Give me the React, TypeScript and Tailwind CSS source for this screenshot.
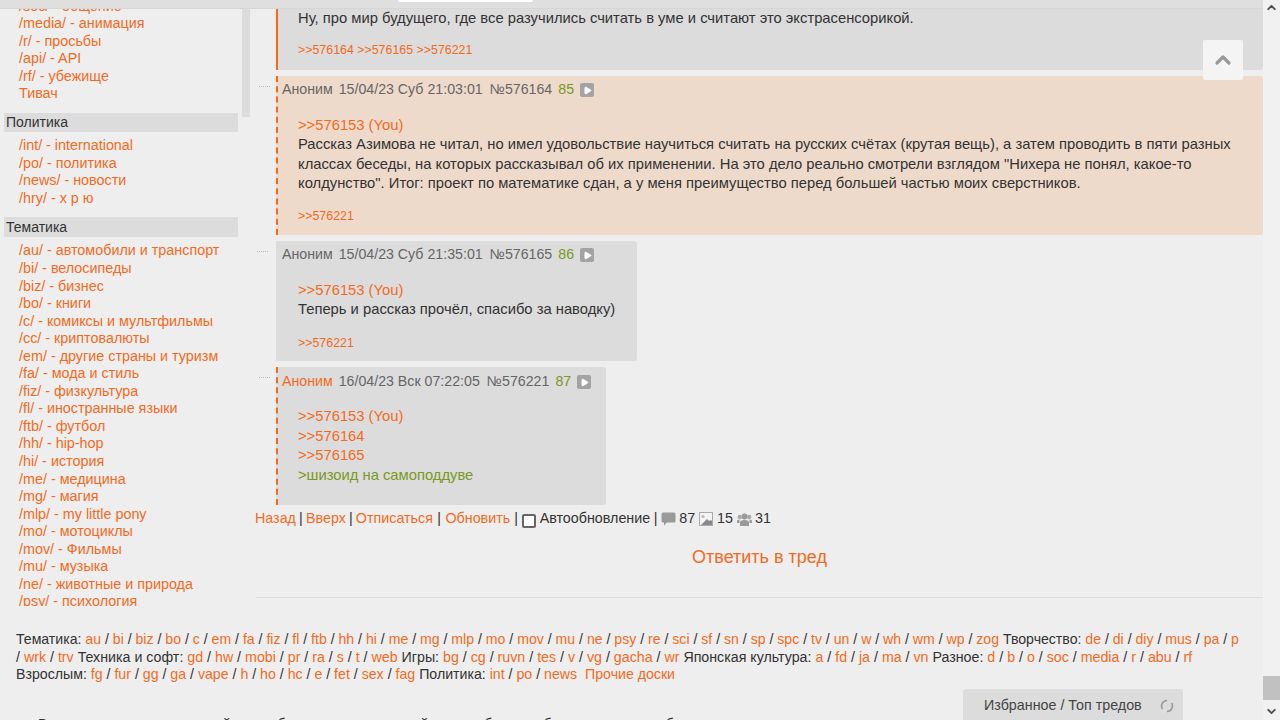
import { Fragment } from "react";
import { ChevronUp, ChevronDown, Play } from "lucide-react";

const ORANGE = "text-[#f26b1d]";

const politics = ["/int/ - international", "/po/ - политика", "/news/ - новости", "/hry/ - х р ю"];
const misc = ["/media/ - анимация", "/r/ - просьбы", "/api/ - API", "/rf/ - убежище", "Тивач"];
const topics = [
  "/au/ - автомобили и транспорт",
  "/bi/ - велосипеды",
  "/biz/ - бизнес",
  "/bo/ - книги",
  "/c/ - комиксы и мультфильмы",
  "/cc/ - криптовалюты",
  "/em/ - другие страны и туризм",
  "/fa/ - мода и стиль",
  "/fiz/ - физкультура",
  "/fl/ - иностранные языки",
  "/ftb/ - футбол",
  "/hh/ - hip-hop",
  "/hi/ - история",
  "/me/ - медицина",
  "/mg/ - магия",
  "/mlp/ - my little pony",
  "/mo/ - мотоциклы",
  "/mov/ - Фильмы",
  "/mu/ - музыка",
  "/ne/ - животные и природа",
  "/psy/ - психология",
];

function BoardList({ items }: { items: string[] }) {
  return (
    <ul className={`pl-[19px] text-[14.35px] ${ORANGE}`}>
      {items.map((b) => (
        <li key={b} className="h-[17.55px] leading-[17.55px] whitespace-nowrap">
          {b}
        </li>
      ))}
    </ul>
  );
}

function Sidebar() {
  return (
    <aside className="relative h-[606px] w-[251px] shrink-0 overflow-hidden">
      <div className="absolute top-0 right-[1px] h-[117px] w-[8px] bg-[#dcdcdc]" />
      <div className={`h-[15px] overflow-hidden pl-[19px] text-[14.35px] leading-[12px] ${ORANGE}`}>/soc/ - общение</div>
      <BoardList items={misc} />
      <h4 className="mt-[10px] ml-1 flex h-[19px] w-[234px] items-center bg-[#dcdcdc] pl-[2px] text-[#333]">Политика</h4>
      <div className="mt-[5.5px]">
        <BoardList items={politics} />
      </div>
      <h4 className="mt-[10px] ml-1 flex h-[20px] w-[234px] items-center bg-[#dcdcdc] pt-px pl-[2px] text-[#333]">Тематика</h4>
      <div className="mt-[5px]">
        <BoardList items={topics} />
      </div>
    </aside>
  );
}

function PostHead({ name, date, num, idx, self }: { name: string; date: string; num: string; idx: number; self?: boolean }) {
  return (
    <div className="flex h-[20px] items-center text-[14.2px] whitespace-nowrap text-[#666]">
      <span className={self ? ORANGE : ""}>{name}</span>
      <span className="ml-[6px]">{date}</span>
      <span className="ml-[7px]">№{num}</span>
      <span className="ml-[6px] text-[#789922]">{idx}</span>
      <span className="ml-[6px] flex h-[14px] w-[14px] items-center justify-center rounded-[2px] bg-[#a3a3a3]">
        <Play size={9} className="fill-white text-white" />
      </span>
    </div>
  );
}

function Dots() {
  return <div className="absolute top-[10px] left-[-19px] h-px w-[11px] border-t border-dotted border-[#bbb]" />;
}

function Sep({ w }: { w: string }) {
  return <span className={`${w} text-center text-[#333]`}>|</span>;
}

function Links({ items }: { items: string[] }) {
  return (
    <>
      {items.map((l, i) => (
        <Fragment key={l}>
          <span className={ORANGE}>{l}</span>
          {i < items.length - 1 ? " / " : " "}
        </Fragment>
      ))}
    </>
  );
}

function Footer() {
  return (
    <div className="mt-[25px] pl-4 leading-[17.6px] whitespace-nowrap text-[#333]">
      <div className="text-[14.1px]">
        Тематика: <Links items={"au bi biz bo c em fa fiz fl ftb hh hi me mg mlp mo mov mu ne psy re sci sf sn sp spc tv un w wh wm wp zog".split(" ")} />
        Творчество: <Links items={"de di diy mus pa p".split(" ")} />
      </div>
      <div className="text-[14.22px]">
        / <Links items={"wrk trv".split(" ")} />
        Техника и софт: <Links items={"gd hw mobi pr ra s t web".split(" ")} />
        Игры: <Links items={"bg cg ruvn tes v vg gacha wr".split(" ")} />
        Японская культура: <Links items={"a fd ja ma vn".split(" ")} />
        Разное: <Links items={"d b o soc media r abu rf".split(" ")} />
      </div>
      <div className="text-[14.16px]">
        Взрослым: <Links items={"fg fur gg ga vape h ho hc e fet sex fag".split(" ")} />
        Политика: <Links items={"int po news".split(" ")} />
        <span className={`ml-1 ${ORANGE}`}>Прочие доски</span>
      </div>
    </div>
  );
}

export default function App() {
  return (
    <div className="relative h-[720px] w-[1280px] overflow-hidden bg-[#eeeeee] font-['Liberation_Sans',Arial,sans-serif] text-[14px] text-[#333]">
      {/* верхняя полоса */}
      <div className="absolute top-0 left-0 z-10 h-[9px] w-[1263px] border-b border-[#d6d6d6] bg-[#dfdfdf] pl-[398px]">
        <div className="h-[2px] w-[135px] rounded-b-[3px] bg-white" />
      </div>

      <div className="flex h-[606px]">
        <Sidebar />
        <main className="relative w-[1012px] shrink-0 pl-[25px]">
          {/* пост 84, начало за верхним краем */}
          <article className="h-[70px] rounded-br-[3px] border-l-2 border-[#f26b1d] bg-[#dcdcdc] pt-[9px] pl-[20px]">
            <p className="h-[18px] text-[14.78px] leading-[18px] whitespace-nowrap">Ну, про мир будущего, где все разучились считать в уме и считают это экстрасенсорикой.</p>
            <p className={`mt-[14px] text-[12.4px] leading-[18px] ${ORANGE}`}>&gt;&gt;576164 &gt;&gt;576165 &gt;&gt;576221</p>
          </article>

          <article className="relative mt-[6px] h-[159px] rounded-r-[3px] border-l-2 border-dashed border-[#f26b1d] bg-[#eedacb] pt-[4px] pl-[4px]">
            <Dots />
            <PostHead name="Аноним" date="15/04/23 Суб 21:03:01" num="576164" idx={85} />
            <div className="mt-[16px] pl-[16px] text-[14.78px] leading-[19.3px] whitespace-nowrap">
              <p className={ORANGE}>&gt;&gt;576153 (You)</p>
              <p>Рассказ Азимова не читал, но имел удовольствие научиться считать на русских счётах (крутая вещь), а затем проводить в пяти разных</p>
              <p>классах беседы, на которых рассказывал об их применении. На это дело реально смотрели взглядом "Нихера не понял, какое-то</p>
              <p>колдунство". Итог: проект по математике сдан, а у меня преимущество перед большей частью моих сверстников.</p>
              <p className={`mt-[14px] text-[12.4px] leading-[18px] ${ORANGE}`}>&gt;&gt;576221</p>
            </div>
          </article>

          <article className="relative mt-[6px] h-[120px] w-[361px] rounded-r-[3px] bg-[#dcdcdc] pt-[4px] pl-[6px]">
            <Dots />
            <PostHead name="Аноним" date="15/04/23 Суб 21:35:01" num="576165" idx={86} />
            <div className="mt-[16px] pl-[16px] text-[14.78px] leading-[19.3px] whitespace-nowrap">
              <p className={ORANGE}>&gt;&gt;576153 (You)</p>
              <p>Теперь и рассказ прочёл, спасибо за наводку)</p>
              <p className={`mt-[14px] text-[12.4px] leading-[18px] ${ORANGE}`}>&gt;&gt;576221</p>
            </div>
          </article>

          <article className="relative mt-[6px] h-[138px] w-[330px] rounded-r-[3px] border-l-2 border-dashed border-[#f26b1d] bg-[#dcdcdc] pt-[5px] pl-[4px]">
            <Dots />
            <PostHead name="Аноним" date="16/04/23 Вск 07:22:05" num="576221" idx={87} self />
            <div className="mt-[15px] pl-[16px] text-[14.78px] leading-[19.6px] whitespace-nowrap">
              <p className={ORANGE}>&gt;&gt;576153 (You)</p>
              <p className={ORANGE}>&gt;&gt;576164</p>
              <p className={ORANGE}>&gt;&gt;576165</p>
              <p className="text-[#789922]">&gt;шизоид на самоподдуве</p>
            </div>
          </article>

          <div className="-ml-[21px] mt-[5px] flex h-[18px] items-center text-[14.3px] whitespace-nowrap">
            <span className={ORANGE}>Назад</span>
            <Sep w="w-[10px]" />
            <span className={ORANGE}>Вверх</span>
            <Sep w="w-[10px]" />
            <span className={ORANGE}>Отписаться</span>
            <Sep w="w-[12.5px]" />
            <span className={ORANGE}>Обновить</span>
            <Sep w="w-[12px]" />
            <span className="mt-[4px] mr-[3.5px] h-[14px] w-[14px] rounded-[2px] border-2 border-[#666] bg-white" />
            <span>Автообновление</span>
            <Sep w="w-[11px]" />
            <svg width="15" height="14" viewBox="0 0 15 14" className="mr-[3px]">
              <path d="M2 0.5h11a1.5 1.5 0 0 1 1.5 1.5v7a1.5 1.5 0 0 1-1.5 1.5H6L3 13.5v-3H2A1.5 1.5 0 0 1 .5 9V2A1.5 1.5 0 0 1 2 .5z" fill="#999" />
            </svg>
            <span>87</span>
            <svg width="14" height="14" viewBox="0 0 14 14" className="mr-[4px] ml-[4px]">
              <rect x="0.5" y="0.5" width="13" height="13" fill="#f4f4f4" stroke="#aaa" />
              <circle cx="4" cy="4.5" r="1.6" fill="#bbb" />
              <path d="M2 13l6-6 2 2 2-1 1 1v4z" fill="#888" />
            </svg>
            <span>15</span>
            <svg width="15" height="13" viewBox="0 0 15 13" className="mr-[3px] ml-[4px]">
              <circle cx="7.5" cy="3.5" r="3" fill="#999" />
              <circle cx="2.8" cy="4" r="2.2" fill="#aaa" />
              <circle cx="12.2" cy="4" r="2.2" fill="#aaa" />
              <path d="M3 13V9.5Q3 7 7.5 7T12 9.5V13zM0 10V8Q0 6.5 2.5 6.5V10zM15 10V8Q15 6.5 12.5 6.5V10z" fill="#999" />
            </svg>
            <span>31</span>
          </div>

          <div className={`-ml-[20px] mt-[19px] text-center text-[18px] leading-[21px] ${ORANGE}`}>Ответить в тред</div>
          <div className="-ml-[20px] mt-[29px] border-t border-[#dcdcdc]" />
        </main>
      </div>

      <Footer />

      <div className="mt-[15px] h-[40px] overflow-hidden pt-[17px] pl-[38px] leading-[17.6px] whitespace-nowrap">
        Вы находитесь на анонимной имиджборде — здесь каждый может общаться без регистрации и без подписи
      </div>

      <div className="absolute bottom-0 left-[963px] h-[31px] w-[220px] rounded-t-[3px] bg-[#dcdcdc] pt-[6px] pl-[21px] text-[14.3px] text-[#444]">
        Избранное / Топ тредов
        <svg width="14" height="14" viewBox="0 0 14 14" fill="none" className="absolute top-[10px] right-[9px]" stroke="#999" strokeWidth="1.6">
          <path d="M2.5 10A5.5 5.5 0 0 1 7 1.5" />
          <path d="M11.5 4A5.5 5.5 0 0 1 7 12.5" />
        </svg>
      </div>

      {/* кнопка наверх */}
      <button className="absolute top-[40px] left-[1203px] z-10 flex h-[40px] w-[40px] items-center justify-center rounded-[2px] bg-[#f4f4f4]">
        <ChevronUp size={24} strokeWidth={3.2} className="text-[#999]" />
      </button>

      {/* полоса прокрутки */}
      <div className="absolute top-0 right-0 flex h-[720px] w-[17px] flex-col items-center justify-between bg-[#f1f1f1]">
        <ChevronUp size={13} strokeWidth={3.5} className="mt-[1px] text-[#505050]" />
        <div className="absolute top-[676px] h-[24px] w-[17px] bg-[#c1c1c1]" />
        <ChevronDown size={13} strokeWidth={3.5} className="mb-[2px] text-[#505050]" />
      </div>
    </div>
  );
}
